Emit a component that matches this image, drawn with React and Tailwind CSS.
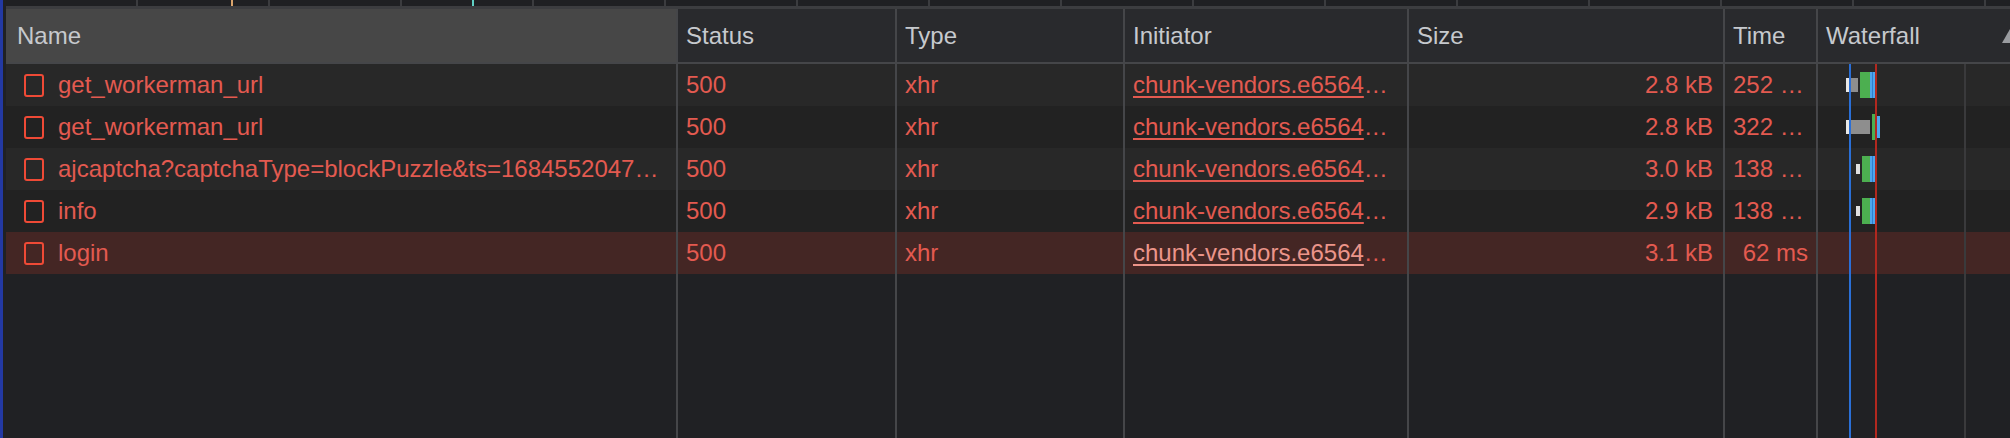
import React from 'react';

const RED = 'text-[#e35a50]';

const requests = [
  { name: 'get_workerman_url', size: '2.8 kB', time: '252 …', cut: true },
  { name: 'get_workerman_url', size: '2.8 kB', time: '322 …', cut: true },
  { name: 'ajcaptcha?captchaType=blockPuzzle&ts=1684552047…', size: '3.0 kB', time: '138 …', cut: true },
  { name: 'info', size: '2.9 kB', time: '138 …', cut: true },
  { name: 'login', size: '3.1 kB', time: '62 ms', selected: true },
];

// timeline bars in the waterfall, coords relative to the column body
const bars = [
  [
    { x: 28, y: 14, w: 3, h: 14, c: '#e8e8e8' },
    { x: 31, y: 14, w: 9, h: 14, c: '#8e8e8e' },
    { x: 42, y: 8, w: 10, h: 26, c: '#4caf50' },
    { x: 52, y: 8, w: 5, h: 26, c: '#4ea6ec' },
  ],
  [
    { x: 28, y: 56, w: 3, h: 14, c: '#e8e8e8' },
    { x: 31, y: 56, w: 21, h: 14, c: '#8e8e8e' },
    { x: 54, y: 50, w: 3, h: 26, c: '#4caf50' },
    { x: 59, y: 52, w: 3, h: 22, c: '#4ea6ec' },
  ],
  [
    { x: 38, y: 100, w: 4, h: 10, c: '#e0e0e0' },
    { x: 44, y: 92, w: 8, h: 26, c: '#4caf50' },
    { x: 52, y: 92, w: 5, h: 26, c: '#4ea6ec' },
  ],
  [
    { x: 38, y: 142, w: 4, h: 10, c: '#e0e0e0' },
    { x: 44, y: 134, w: 8, h: 26, c: '#4caf50' },
    { x: 52, y: 134, w: 5, h: 26, c: '#4ea6ec' },
  ],
];

const FileIcon = () => (
  <svg width="20" height="23" viewBox="0 0 20 23" className="shrink-0">
    <rect x="1" y="1" width="18" height="21" rx="2" fill="none" stroke="#ef4a36" strokeWidth="2" />
  </svg>
);

const Waterfall = () => (
  <svg
    width="192"
    height="374"
    viewBox="0 0 192 374"
    className="absolute left-[1812px] top-[64px] pointer-events-none"
  >
    <rect x="146" y="0" width="2" height="374" fill="#3a3a3c" />
    {bars.flat().map((b, i) => (
      <rect key={i} x={b.x} y={b.y} width={b.w} height={b.h} fill={b.c} />
    ))}
    <rect x="54" y="8" width="1" height="26" fill="#2f7fd0" />
    <rect x="54" y="92" width="1" height="26" fill="#2f7fd0" />
    <rect x="54" y="134" width="1" height="26" fill="#2f7fd0" />
    <rect x="31" y="0" width="2" height="374" fill="#2a6fd6" />
    <rect x="57" y="0" width="2" height="374" fill="#b2281f" />
  </svg>
);

const Cells = ({ children, bg, cut }) => {
  const [name, status, type, initiator, size, time, waterfall] = children;
  const line = 'border-r-2 border-[#454649]';
  return (
    <div className={`flex h-[42px] ${bg}`}>
      <div className={`w-[672px] shrink-0 ${line} flex items-center overflow-hidden`}>{name}</div>
      <div className={`w-[219px] shrink-0 ${line} flex items-center pl-[8px]`}>{status}</div>
      <div className={`w-[228px] shrink-0 ${line} flex items-center pl-[8px]`}>{type}</div>
      <div className={`w-[284px] shrink-0 ${line} flex items-center pl-[8px] overflow-hidden`}>{initiator}</div>
      <div className={`w-[316px] shrink-0 ${line} flex items-center justify-end pr-[10px]`}>{size}</div>
      <div
        className={`w-[93px] shrink-0 ${line} flex items-center overflow-hidden whitespace-nowrap ${
          cut ? 'pl-[8px]' : 'justify-end pr-[8px]'
        }`}
      >
        {time}
      </div>
      <div className="flex-1">{waterfall}</div>
    </div>
  );
};

export default function App() {
  const head = 'h-[53px] shrink-0 border-r-2 border-[#454649] flex items-center pl-[8px]';
  return (
    <div className="w-[2010px] h-[438px] bg-[#202124] flex overflow-hidden font-['Liberation_Sans',Arial,sans-serif] text-[24px]">
      <div className="w-[3px] shrink-0 bg-[#2339a3]" />
      <div className="w-[3px] shrink-0" />
      <div className="flex-1 flex flex-col relative min-w-0">
        {/* overview ruler */}
        <div className="h-[6px] flex bg-[#1f2023] relative">
          {Array.from({ length: 16 }).map((_, i) => (
            <div key={i} className="w-[132px] shrink-0 border-r-2 border-[#3b3c3f]" />
          ))}
          <div className="absolute left-[225px] top-0 w-[2px] h-[6px] bg-[#d9a46c]" />
          <div className="absolute left-[466px] top-0 w-[2px] h-[6px] bg-[#5fd0c4]" />
        </div>
        <div className="h-[3px] bg-[#3c3d40]" />

        {/* header */}
        <div className="flex bg-[#292a2d] text-[#c6c9cd]">
          <div className={`w-[672px] ${head} bg-[#474747] pl-[11px]`}>Name</div>
          <div className={`w-[219px] ${head}`}>Status</div>
          <div className={`w-[228px] ${head}`}>Type</div>
          <div className={`w-[284px] ${head}`}>Initiator</div>
          <div className={`w-[316px] ${head}`}>Size</div>
          <div className={`w-[93px] ${head}`}>Time</div>
          <div className="flex-1 h-[53px] flex items-center pl-[8px] overflow-hidden">
            <span>Waterfall</span>
            <svg width="16" height="14" viewBox="0 0 16 14" className="ml-auto mr-[-8px] shrink-0">
              <polygon points="8,0 16,14 0,14" fill="#9a9ca0" />
            </svg>
          </div>
        </div>
        <div className="h-[2px] bg-[#454649]" />

        {/* requests */}
        <div className={RED}>
          {requests.map((r, i) => (
            <Cells
              key={i}
              cut={r.cut}
              bg={r.selected ? 'bg-[#442624]' : i % 2 === 0 ? 'bg-[#282828]' : 'bg-[#222222]'}
            >
              <div className="flex items-center pl-[18px] gap-[14px] whitespace-nowrap min-w-0">
                <FileIcon />
                <span className="truncate">{r.name}</span>
              </div>
              <span>500</span>
              <span>xhr</span>
              <span className="whitespace-nowrap">
                <span className={`underline underline-offset-[3px] ${r.selected ? 'text-[#ec958a]' : ''}`}>
                  chunk-vendors.e6564
                </span>
                …
              </span>
              <span>{r.size}</span>
              <span>{r.time}</span>
              <span />
            </Cells>
          ))}
        </div>

        {/* empty space under the list, column lines carry on */}
        <div className="flex-1 flex">
          <div className="w-[672px] shrink-0 border-r-2 border-[#454649]" />
          <div className="w-[219px] shrink-0 border-r-2 border-[#454649]" />
          <div className="w-[228px] shrink-0 border-r-2 border-[#454649]" />
          <div className="w-[284px] shrink-0 border-r-2 border-[#454649]" />
          <div className="w-[316px] shrink-0 border-r-2 border-[#454649]" />
          <div className="w-[93px] shrink-0 border-r-2 border-[#454649]" />
          <div className="flex-1" />
        </div>

        <Waterfall />
      </div>
    </div>
  );
}
